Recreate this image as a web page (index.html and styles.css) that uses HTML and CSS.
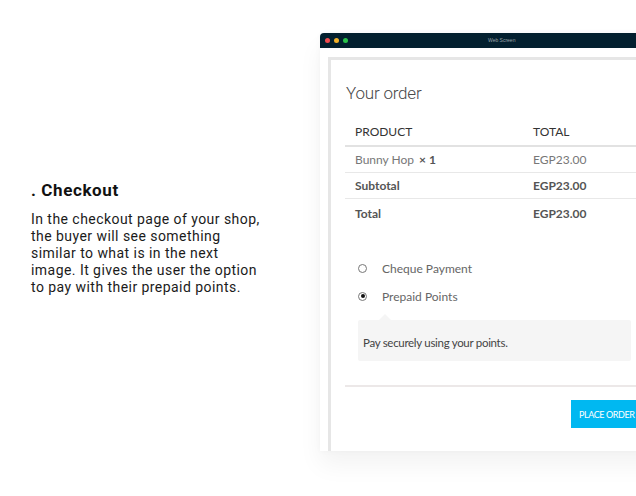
FILE: index.html
```html
<!DOCTYPE html>
<html>
<head>
<meta charset="utf-8">
<link rel="stylesheet" href="styles.css">
</head>
<body>
<section class="intro">
  <h2 class="intro-title">. Checkout</h2>
  <p class="intro-text">In the checkout page of your shop,<br>the buyer will see something<br>similar to what is in the next<br>image. It gives the user the option<br>to pay with their prepaid points.</p>
</section>
<div class="window">
  <div class="titlebar">
    <span class="dot dot-red"></span><span class="dot dot-yellow"></span><span class="dot dot-green"></span>
    <span class="titlebar-text">Web Screen</span>
  </div>
  <div class="window-body">
    <div class="frame">
      <h3 class="order-title">Your order</h3>
      <table class="order-table">
        <thead>
          <tr><th class="col-product">Product</th><th>Total</th></tr>
        </thead>
        <tbody>
          <tr class="row-item"><td class="muted">Bunny Hop <strong class="qty">× 1</strong></td><td class="muted">EGP23.00</td></tr>
          <tr class="row-sub"><th>Subtotal</th><td class="strong">EGP23.00</td></tr>
          <tr class="row-total"><th>Total</th><td class="strong">EGP23.00</td></tr>
        </tbody>
      </table>
      <ul class="payments">
        <li class="payment"><span class="radio"></span><span class="payment-label">Cheque Payment</span></li>
        <li class="payment"><span class="radio radio-on"></span><span class="payment-label">Prepaid Points</span></li>
      </ul>
      <div class="payment-box">Pay securely using your points.</div>
      <div class="place-row">
        <button class="place-btn">PLACE ORDER</button>
      </div>
    </div>
  </div>
</div>
</body>
</html>
```

FILE: styles.css
```css
html, body {
  margin: 0;
  padding: 0;
}
body {
  width: 636px;
  height: 496px;
  overflow: hidden;
  background: #ffffff;
  display: flex;
  align-items: flex-start;
}
.intro {
  width: 289px;
  flex-shrink: 0;
  box-sizing: border-box;
  padding: 180px 0 0 31px;
  font-family: Roboto, "Liberation Sans", sans-serif;
  color: #1b1b1b;
}
.intro-title {
  margin: 0 0 11px;
  font-size: 17px;
  font-weight: 700;
  letter-spacing: 0.6px;
  line-height: 20px;
  color: #111;
}
.intro-text {
  margin: 0;
  font-size: 14px;
  line-height: 17px;
  letter-spacing: 0.45px;
  white-space: nowrap;
}
.window {
  flex-shrink: 0;
  width: 340px;
  height: 418px;
  margin-top: 33px;
  margin-left: 31px;
  background: #fff;
  border-radius: 4px 0 0 0;
  box-shadow: 0 14px 24px rgba(0, 0, 0, 0.05), 0 0 6px rgba(0, 0, 0, 0.03);
  display: flex;
  flex-direction: column;
}
.titlebar {
  height: 15px;
  background: #03202f;
  border-radius: 4px 0 0 0;
  display: flex;
  align-items: center;
  padding-left: 5px;
  gap: 4px;
  position: relative;
}
.dot {
  width: 5px;
  height: 5px;
  border-radius: 50%;
}
.dot-red { background: #f04b4f; }
.dot-yellow { background: #f2b12a; }
.dot-green { background: #2ac34a; }
.titlebar-text {
  position: absolute;
  left: 168px;
  top: 4px;
  font-family: "Liberation Sans", sans-serif;
  font-size: 5px;
  line-height: 6px;
  color: #9aa3a8;
}
.window-body {
  flex: 1;
  padding: 9px 0 0 8px;
  display: flex;
}
.frame {
  flex: 1;
  border-left: 3px solid #e6e6e6;
  border-top: 3px solid #e6e6e6;
  padding: 0 14px 0 14px;
  font-family: Lato, "Open Sans", sans-serif;
}
.order-title {
  margin: 22px 0 14px 1px;
  font-family: Roboto, sans-serif;
  font-weight: 300;
  font-size: 17px;
  line-height: 22px;
  color: #4a4a4a;
  letter-spacing: -0.2px;
}
.order-table {
  width: 100%;
  border-collapse: collapse;
  font-size: 12px;
}
.order-table th, .order-table td {
  text-align: left;
  padding: 0 0 0 10px;
}
.order-table thead th {
  height: 27px;
  text-transform: uppercase;
  font-weight: 400;
  color: #333;
  border-bottom: 2px solid #e2e2e2;
  vertical-align: middle;
}
.order-table .col-product {
  width: 168px;
}
.order-table tbody tr {
  border-bottom: 1px solid #e8e8e8;
}
.order-table tbody tr:last-child {
  border-bottom: none;
}
.row-item td { height: 25px; }
.row-sub th, .row-sub td { height: 25px; }
.row-total th, .row-total td { height: 28px; }
.order-table tbody th {
  font-weight: 700;
  color: #555;
}
.muted { color: #777; }
.muted strong { color: #555; font-weight: 700; }
.qty { margin-left: 2px; }
.strong { font-weight: 700; color: #555; }
.payments {
  list-style: none;
  margin: 27px 0 0 13px;
  padding: 0;
}
.payment {
  display: flex;
  align-items: center;
  height: 28px;
  font-size: 12px;
  color: #666;
}
.radio {
  width: 7px;
  height: 7px;
  border: 1px solid #777;
  border-radius: 50%;
  margin: 0 15px 0 0;
  position: relative;
  flex-shrink: 0;
}
.radio-on::after {
  content: "";
  position: absolute;
  left: 1.5px;
  top: 1.5px;
  width: 4px;
  height: 4px;
  border-radius: 50%;
  background: #111;
}
.payment-box {
  position: relative;
  margin: 10px 15px 0 13px;
  height: 41px;
  background: #f5f5f5;
  border-radius: 2px;
  font-size: 11.5px;
  letter-spacing: -0.3px;
  color: #444;
  display: flex;
  align-items: center;
  padding-left: 5px;
  padding-top: 3px;
  box-sizing: border-box;
}
.payment-box::before {
  content: "";
  position: absolute;
  top: -6px;
  left: 21px;
  border-left: 6px solid transparent;
  border-right: 6px solid transparent;
  border-bottom: 6px solid #f5f5f5;
}
.place-row {
  margin-top: 24px;
  border-top: 2px solid #ece8e8;
  display: flex;
  justify-content: flex-end;
  padding-top: 13px;
}
.place-btn {
  width: 75px;
  height: 28px;
  border: none;
  background: #00b8f1;
  color: #fff;
  font-family: Lato, sans-serif;
  font-size: 9px;
  letter-spacing: -0.4px;
  text-align: left;
  padding: 0 0 0 8px;
  border-radius: 0;
  white-space: nowrap;
}
```
